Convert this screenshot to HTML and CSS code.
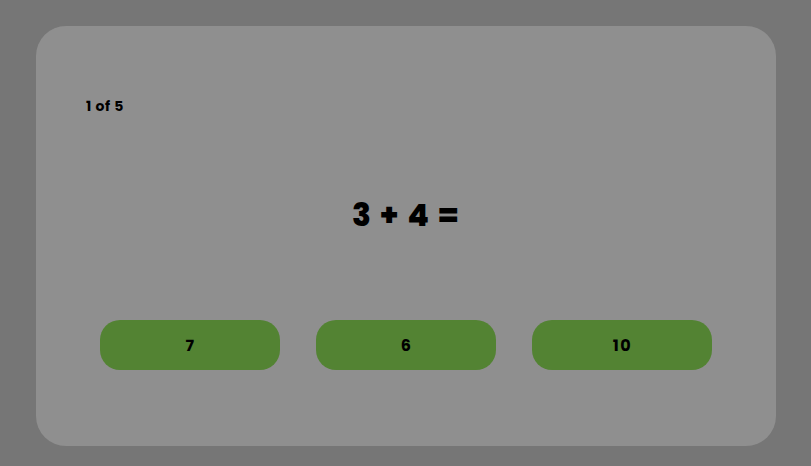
FILE: index.html
```html
<!DOCTYPE html>
<html lang="en">
<head>
<meta charset="utf-8">
<title>Quiz</title>
<link rel="stylesheet" href="styles.css">
</head>
<body>
<main class="card">
  <div class="counter">1 of 5</div>
  <h1 class="question">3 + 4 =</h1>
  <div class="answers">
    <button class="answer">7</button>
    <button class="answer">6</button>
    <button class="answer">10</button>
  </div>
</main>
</body>
</html>
```
FILE: styles.css
```css
html, body {
  margin: 0;
  padding: 0;
}
body {
  background: #767676;
  width: 811px;
  height: 466px;
  padding: 26px 0 0 36px;
  box-sizing: border-box;
  font-family: "Poppins", Inter, "Liberation Sans", sans-serif;
  color: #000;
}
.card {
  width: 740px;
  height: 420px;
  box-sizing: border-box;
  background: #8f8f8f;
  border-radius: 30px;
  padding: 70px 50px 0 50px;
  display: flex;
  flex-direction: column;
}
.counter {
  font-size: 14px;
  font-weight: 700;
  line-height: 20px;
  letter-spacing: 0.6px;
}
.question {
  margin: 79px 0 0 0;
  font-size: 31px;
  font-weight: 800;
  line-height: 40px;
  text-align: center;
  letter-spacing: 1.6px;
}
.answers {
  margin-top: 85px;
  display: flex;
  justify-content: center;
  gap: 36px;
}
.answer {
  width: 180px;
  height: 50px;
  border: none;
  border-radius: 20px;
  background: #538333;
  font-family: inherit;
  font-size: 16px;
  font-weight: 700;
  letter-spacing: 1.5px;
  color: #000;
  padding: 0 0 0 1px;
}
```
